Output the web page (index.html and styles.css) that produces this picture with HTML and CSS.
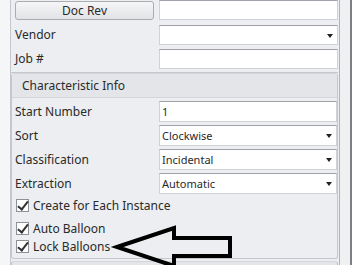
FILE: index.html
```html
<!DOCTYPE html>
<html lang="en">
<head>
    <meta charset="UTF-8">
    <title>Characteristic Info</title>
    <link rel="stylesheet" href="styles.css">
</head>
<body>
    <div class="window">
        <div class="side-left"></div>

        <div class="panel">
            <div class="top">
                <div class="row">
                    <button class="btn">Doc Rev</button>
                    <div class="field"></div>
                </div>
                <div class="row">
                    <span class="label">Vendor</span>
                    <div class="field combo"><span class="drop"></span></div>
                </div>
                <div class="row">
                    <span class="label">Job #</span>
                    <div class="field"></div>
                </div>
            </div>

            <div class="group">
                <div class="group-head">Characteristic Info</div>
                <div class="group-body">
                    <div class="row">
                        <span class="label">Start Number</span>
                        <div class="field">1</div>
                    </div>
                    <div class="row">
                        <span class="label">Sort</span>
                        <div class="field combo">Clockwise<span class="drop"></span></div>
                    </div>
                    <div class="row">
                        <span class="label">Classification</span>
                        <div class="field combo">Incidental<span class="drop"></span></div>
                    </div>
                    <div class="row">
                        <span class="label">Extraction</span>
                        <div class="field combo">Automatic<span class="drop"></span></div>
                    </div>

                    <label class="check first"><span class="box"></span>Create for Each Instance</label>
                    <label class="check"><span class="box"></span>Auto Balloon</label>
                    <label class="check"><span class="box"></span>Lock Balloons</label>
                </div>
            </div>

            <div class="group next"></div>
        </div>

        <div class="side-right"></div>

        <!-- annotation arrow drawn over the form -->
        <svg class="arrow" width="130" height="50" viewBox="0 0 130 50">
            <path d="M15 28 L72 9 L72 19 L128 19 L128 37 L72 37 L72 47 Z"
                  fill="none" stroke="#000" stroke-width="4" stroke-linejoin="miter"/>
        </svg>
    </div>
</body>
</html>
```

FILE: styles.css
```css
* {
    margin: 0;
    padding: 0;
    box-sizing: border-box;
}

body {
    width: 352px;
    height: 265px;
    overflow: hidden;
    font-family: "Noto Sans", "Open Sans", sans-serif;
    font-size: 12px;
    color: #2a2a2a;
    background: #f3f4f6;
}

.window {
    position: relative;
    display: flex;
    height: 265px;
    overflow: hidden;
}

.side-left {
    width: 10px;
    flex: none;
    background: #f5f6f8;
}

.panel {
    width: 330px;
    flex: none;
    background: #eceef1;
    border-left: 1px solid #c4c7cc;
    border-right: 1px solid #b0b4ba;
    padding-right: 1px;
}

.side-right {
    width: 12px;
    flex: none;
    background: #eef0f2;
    border-right: 2px solid #7c7f83;
}

.row {
    display: flex;
    align-items: center;
    height: 24px;
}

.label {
    width: 147px;
    padding-left: 3px;
    flex: none;
}

.field {
    position: relative;
    flex: 1;
    height: 21px;
    background: #fff;
    border: 1px solid #cfd3d9;
    border-top-color: #9fa3a9;
    padding: 2px 2px;
    font-size: 11px;
    line-height: 15px;
}

.combo .drop {
    position: absolute;
    right: 4px;
    top: 8px;
    border-left: 3px solid transparent;
    border-right: 3px solid transparent;
    border-top: 4px solid #222;
}

.top {
    padding-left: 4px;
    height: 73px;
    border-bottom: 1px solid #c4c7cc;
}

.top .row {
    align-items: flex-start;
}

.top .row + .row {
    padding-top: 1px;
}

.top .label {
    width: 144px;
    padding-left: 0;
    padding-top: 1px;
}

.top .field {
    height: 20px;
}

.btn {
    width: 139px;
    height: 19px;
    margin-top: 1px;
    margin-right: 5px;
    flex: none;
    font-family: inherit;
    font-size: 12px;
    color: #2a2a2a;
    border: 1px solid #a9acb1;
    border-radius: 3px;
    background: linear-gradient(#f6f6f7, #e2e3e6);
}

.group {
    border: 1px solid #c4c7cc;
    border-top-color: #d3d6db;
    border-radius: 3px;
    height: 186px;
}

.group-head {
    height: 24px;
    line-height: 23px;
    padding-left: 10px;
    background: #e3e5e9;
    border-bottom: 1px solid #d3d6db;
}

.group-body {
    padding-top: 1px;
}

.check {
    display: flex;
    align-items: center;
    padding-left: 4px;
    height: 18px;
}

.check.first {
    margin-top: 1px;
    margin-bottom: 5px;
}

.box {
    width: 13px;
    height: 13px;
    margin-right: 4px;
    border: 1px solid #8e9297;
    background: #fff;
    position: relative;
}

.box::after {
    content: "";
    position: absolute;
    left: 3px;
    top: -1px;
    width: 4px;
    height: 9px;
    border-right: 2px solid #333;
    border-bottom: 2px solid #333;
    transform: rotate(38deg);
}

.group.next {
    margin-top: 2px;
    height: 20px;
    background: #e3e5e9;
}

.arrow {
    position: absolute;
    left: 102px;
    top: 219px;
    overflow: visible;
}
```
